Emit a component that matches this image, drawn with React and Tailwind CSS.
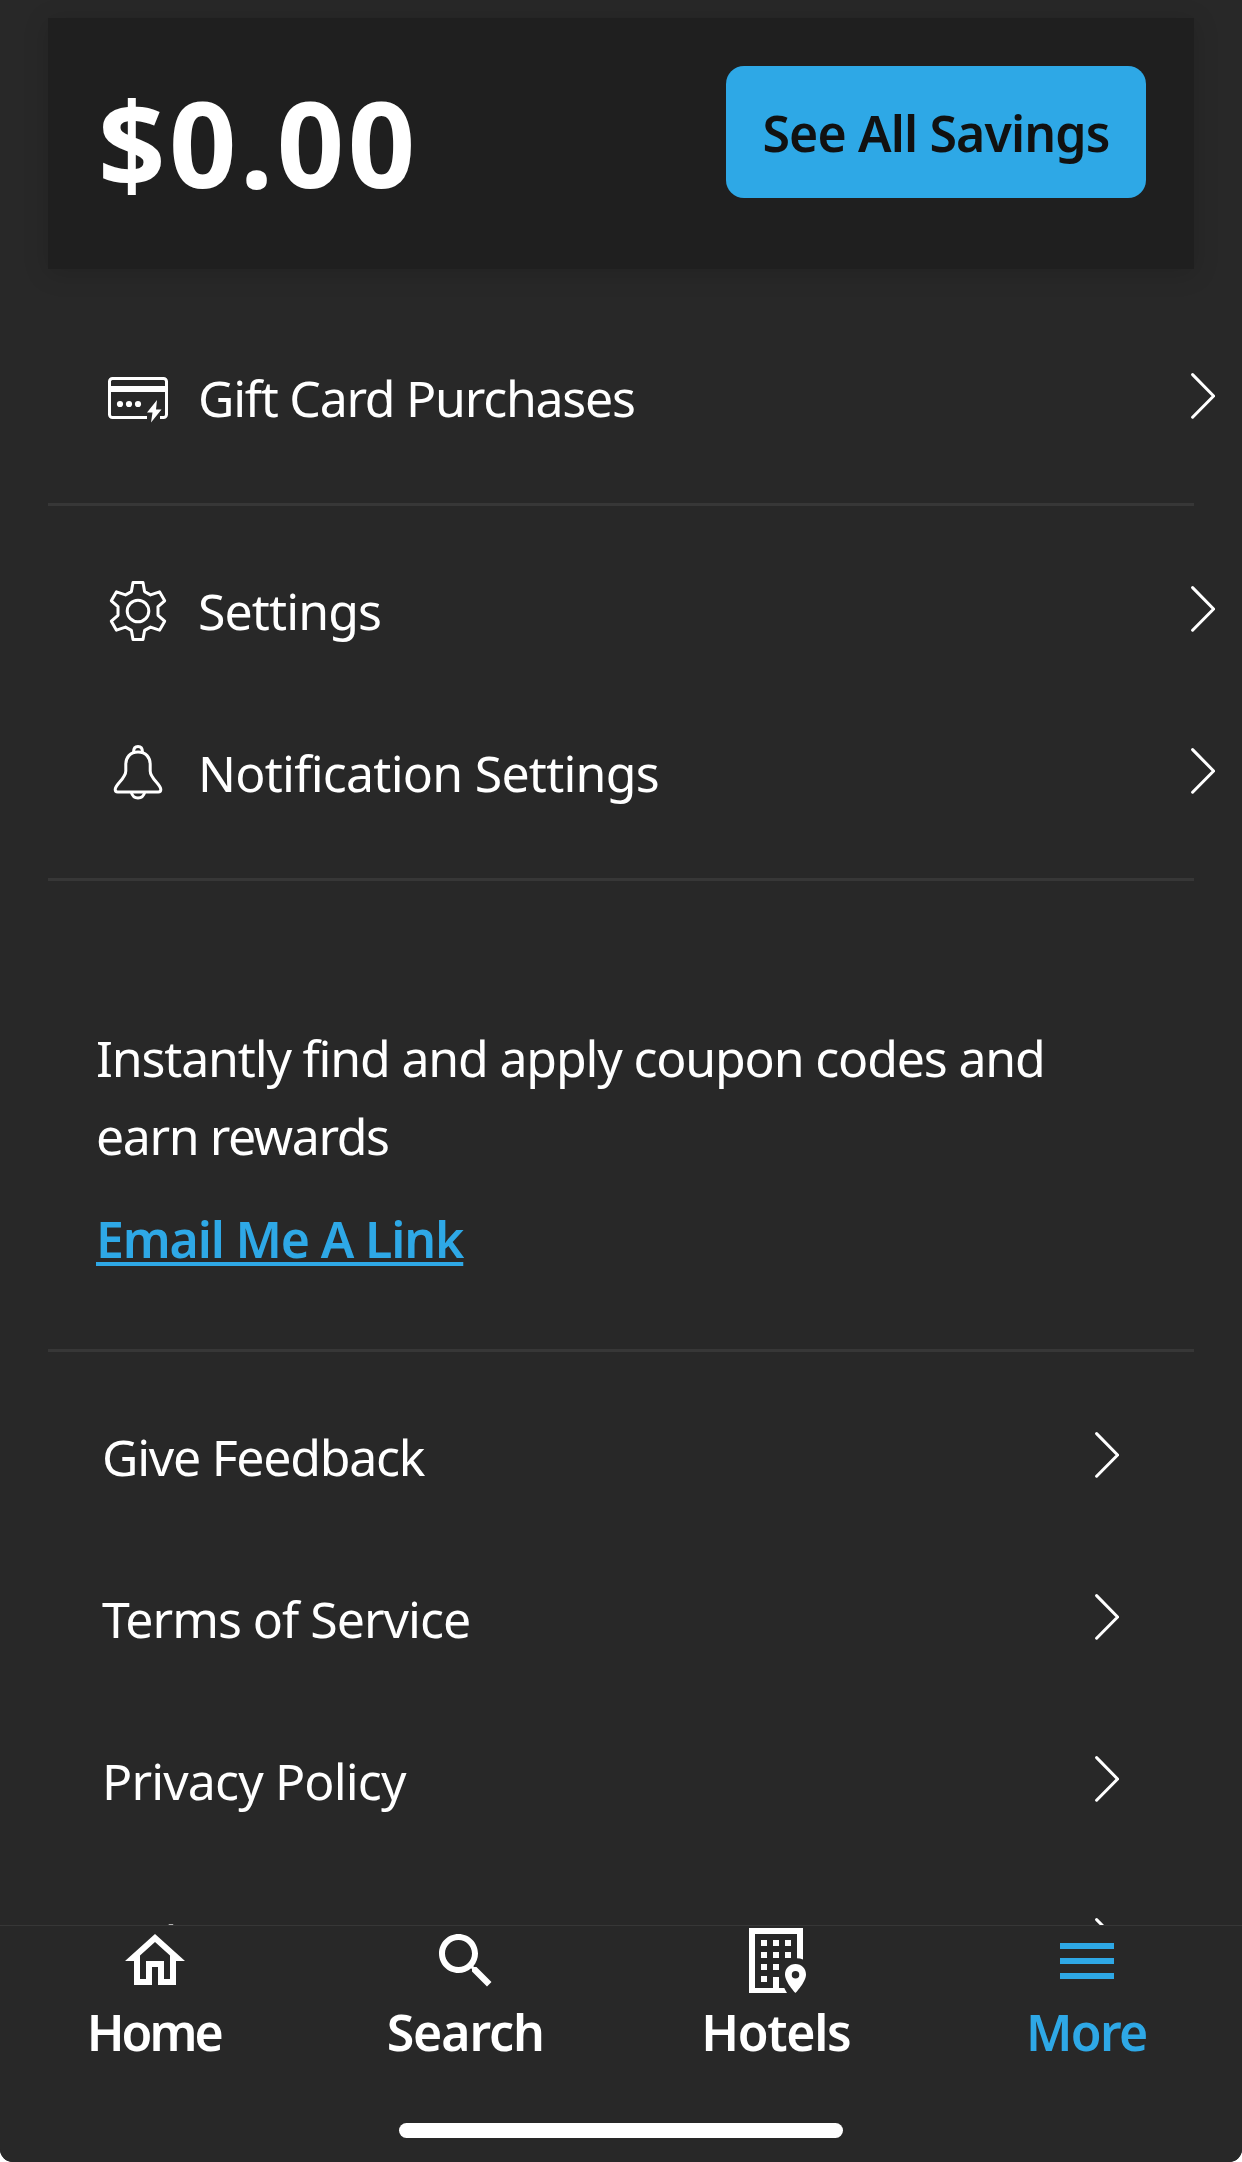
import React from 'react';

function Chevron() {
  return (
    <svg className="w-6 h-[46px] mb-1 shrink-0" viewBox="0 0 24 46" fill="none" stroke="white" strokeWidth="3" strokeLinecap="round" strokeLinejoin="round">
      <path d="M1.6 1.6 22.6 23 1.6 44.2" />
    </svg>
  );
}

function GiftCardIcon() {
  return (
    <svg className="w-[60px] h-[60px]" viewBox="0 0 60 60" fill="none">
      <path d="M39 49.5H4.5a3 3 0 0 1-3-3v-33a3 3 0 0 1 3-3h51a3 3 0 0 1 3 3v33a3 3 0 0 1-3 3H52" stroke="white" strokeWidth="3" />
      <path d="M2 18h56v6H2z" fill="white" />
      <g fill="white">
        <circle cx="12" cy="36" r="3.1" />
        <circle cx="21" cy="36" r="3.1" />
        <circle cx="30" cy="36" r="3.1" />
        <path d="M49 32 39 44.5h5.5L43 54.5 53.5 41.5H48z" />
      </g>
    </svg>
  );
}

function GearIcon() {
  return (
    <svg className="w-[60px] h-[60px]" viewBox="0 0 60 60" fill="none" stroke="white" strokeWidth="3" strokeLinejoin="round">
      <path d="M25 1.5h10l1.6 9.1 5.9 3.3 9-3.1 5.2 9-6.7 5.9v8.6l6.7 5.9-5.2 9-9-3.1-5.9 3.3L35 58.5H25l-1.6-9.1-5.9-3.3-9 3.1-5.2-9 6.7-5.9v-8.6l-6.7-5.9 5.2-9 9 3.1 5.9-3.3z" />
      <circle cx="30" cy="30" r="10.8" />
    </svg>
  );
}

function BellIcon() {
  return (
    <svg className="w-[60px] h-[60px]" viewBox="0 0 60 60" fill="none" stroke="white" strokeWidth="3" strokeLinejoin="round">
      <path d="M30 9c-8 0-12.2 5.5-12.2 12.5V28c0 7.5-10.6 13.5-10.6 18.5 0 1.7 1 2.5 2.5 2.5h40.6c1.500 0 2.500-.8 2.500-2.500 0-5-10.600-11-10.600-18.500v-6.500C42.200 14.500 38 9 30 9z" />
      <path d="M25.5 9.5c0-3.8 1.7-5.9 4.5-5.9s4.500 2.100 4.500 5.900" />
      <path d="M23.2 49c1 4 3.500 6 6.800 6s5.800-2 6.800-6" />
    </svg>
  );
}

function HomeIcon() {
  return (
    <svg className="w-[72px] h-[72px]" viewBox="0 0 24 24" fill="currentColor">
      <path d="m12 5.69 5 4.5V18h-2v-6H9v6H7v-7.81l5-4.5M12 3 2 12h3v8h6v-6h2v6h6v-8h3L12 3z" />
    </svg>
  );
}

function SearchIcon() {
  return (
    <svg className="w-[72px] h-[72px]" viewBox="0 0 24 24" fill="currentColor">
      <path d="M15.5 14h-.79l-.28-.27C15.41 12.59 16 11.11 16 9.5 16 5.91 13.09 3 9.5 3S3 5.91 3 9.5 5.91 16 9.5 16c1.61 0 3.09-.59 4.23-1.57l.27.28v.79l5 4.99L20.49 19l-4.99-5zm-6 0C7.01 14 5 11.99 5 9.5S7.01 5 9.5 5 14 7.01 14 9.5 11.99 14 9.5 14z" />
    </svg>
  );
}

function HotelIcon() {
  return (
    <svg className="w-[72px] h-[72px]" viewBox="0 0 72 72" fill="currentColor">
      <path d="M9 3h54v31.5c-2-.9-4-1.3-6-1.3V9H15v54h18V52h6v11h5.3c.8 1.8 1.7 3.5 2.7 5H9z" />
      <path d="M21 15h6v6h-6zM33 15h6v6h-6zM45 15h6v6h-6zM21 27h6v6h-6zM33 27h6v6h-6zM45 27h6v6h-6zM21 39h6v6h-6zM33 39h6v6h-6zM21 51h6v6h-6z" />
      <path fillRule="evenodd" d="M55.5 39C49.5 39 45 43.5 45 49.5 45 57 55.5 68 55.5 68S66 57 66 49.5C66 43.5 61.5 39 55.5 39zm0 7a3.500 3.500 0 1 1 0 7.500 3.500 3.500 0 0 1 0-7.500z" />
    </svg>
  );
}

function MenuIcon() {
  return (
    <svg className="w-[72px] h-[72px]" viewBox="0 0 24 24" fill="currentColor">
      <path d="M3 18h18v-2H3v2zm0-5h18v-2H3v2zm0-7v2h18V6H3z" />
    </svg>
  );
}

const accountLinks = [
  { label: 'Settings', icon: GearIcon, tracking: 'tracking-[-0.9px]' },
  { label: 'Notification Settings', icon: BellIcon, tracking: 'tracking-[-0.75px]' },
];

const supportLinks = [
  { label: 'Give Feedback', tracking: 'tracking-[-1.25px]' },
  { label: 'Terms of Service', tracking: 'tracking-[-1px]' },
  { label: 'Privacy Policy', tracking: 'tracking-[-0.85px]' },
  { label: 'Help', tracking: 'tracking-[-1.35px]' },
];

const tabs = [
  { label: 'Home', icon: HomeIcon, tracking: 'tracking-[-3px] pr-[3px]' },
  { label: 'Search', icon: SearchIcon, tracking: 'tracking-[-1.1px] pr-px' },
  { label: 'Hotels', icon: HotelIcon, tracking: 'tracking-[-1.3px] pr-px' },
  { label: 'More', icon: MenuIcon, tracking: 'tracking-[-1.7px] pr-px', active: true },
];

function IconRow({ icon: Icon, label, tracking }) {
  return (
    <a className="h-[162px] flex items-center pl-[108px] pr-[27px]">
      <Icon />
      <span className={`ml-[30px] flex-1 text-[50px] leading-[60px] whitespace-nowrap ${tracking}`}>{label}</span>
      <Chevron />
    </a>
  );
}

export default function App() {
  return (
    <div className="bg-white">
      <div className="w-[1242px] h-[2162px] flex flex-col overflow-hidden rounded-b-[13px] bg-[#282828] text-white font-['Noto_Sans',sans-serif]">
        <main className="h-[1925px] shrink-0 overflow-hidden">
          {/* Savings balance */}
          <section className="mt-[18px] mx-12 h-[251px] flex items-start justify-between bg-[#1f1f1f] pl-[50px] pr-12 pt-12 shadow-[0_4px_24px_rgba(0,0,0,0.15)]">
            <div className="text-[118px] leading-[154px] font-bold tracking-[3.5px]">$0.00</div>
            <button className="w-[420px] h-[132px] pt-0.5 rounded-[18px] bg-[#2ea8e6] text-[#111] text-[50px] font-semibold tracking-[-0.85px] whitespace-nowrap">
              See All Savings
            </button>
          </section>

          <div className="mt-12">
            <IconRow icon={GiftCardIcon} label="Gift Card Purchases" tracking="tracking-[-1.25px]" />
          </div>

          <hr className="mt-6 mx-12 border-t-[3px] border-[#373737]" />

          <div className="mt-6">
            {accountLinks.map((link) => <IconRow key={link.label} {...link} />)}
          </div>

          <hr className="mt-6 mx-12 border-t-[3px] border-[#373737]" />

          {/* Browser extension promo */}
          <section className="mt-[138px] px-24">
            <p className="text-[50px] leading-[78px] tracking-[-1.17px] whitespace-nowrap">
              Instantly find and apply coupon codes and<br />
              <span className="tracking-[-1.4px]">earn rewards</span>
            </p>
            <a className="mt-[25px] block w-fit text-[50px] leading-[78px] font-semibold tracking-[-1.15px] text-[#2ea8e6] underline decoration-4 underline-offset-4 whitespace-nowrap">
              Email Me A Link
            </a>
          </section>

          <hr className="mt-[71px] mx-12 border-t-[3px] border-[#373737]" />

          <div className="mt-6">
            {supportLinks.map(({ label, tracking }) => (
              <a key={label} className="h-[162px] flex items-center justify-between pl-[102px] pr-[123px]">
                <span className={`text-[50px] leading-[60px] whitespace-nowrap ${tracking}`}>{label}</span>
                <Chevron />
              </a>
            ))}
          </div>
        </main>

        {/* Bottom tab bar */}
        <nav className="h-[237px] shrink-0 flex flex-col items-center border-t border-[#373737] bg-[#282828]">
          <div className="-mt-px w-full flex">
            {tabs.map(({ label, icon: Icon, tracking, active }) => (
              <a key={label} className={`flex-1 flex flex-col items-center ${active ? 'text-[#2ea8e6]' : ''}`}>
                <Icon />
                <span className={`mt-[5px] text-[50px] leading-[60px] font-semibold whitespace-nowrap ${tracking}`}>{label}</span>
              </a>
            ))}
          </div>
          <div className="mt-[61px] w-[444px] h-[15px] rounded-full bg-white" />
        </nav>
      </div>
    </div>
  );
}
